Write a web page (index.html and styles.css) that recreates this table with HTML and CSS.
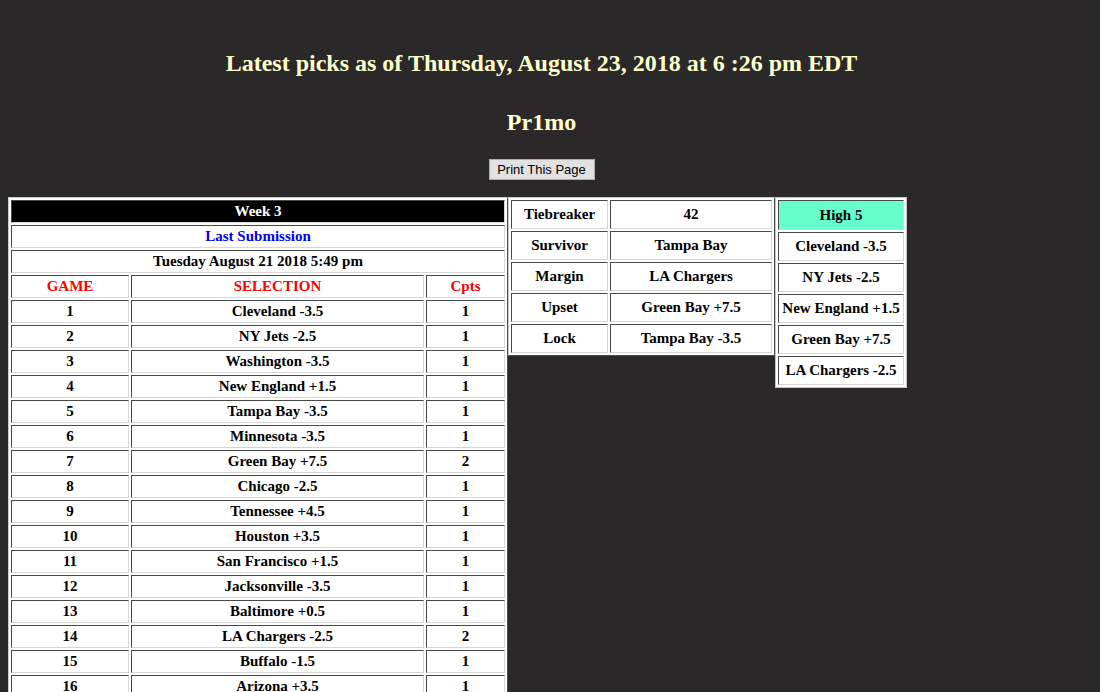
FILE: index.html
```html
<!DOCTYPE html>
<html>
<head>
<meta charset="utf-8">
<title>Latest picks</title>
<link rel="stylesheet" href="styles.css">
</head>
<body>
<div class="page">
  <h2 class="title">Latest picks as of Thursday, August 23, 2018 at 6 :26 pm EDT</h2>
  <h2 class="name">Pr1mo</h2>
  <div class="print-row"><button class="print-btn" type="button">Print This Page</button></div>
  <div class="boards">
    <table class="sheet picks">
      <tr><td colspan="3" class="week">Week 3</td></tr>
      <tr><td colspan="3" class="blue">Last Submission</td></tr>
      <tr><td colspan="3">Tuesday August 21 2018 5:49 pm</td></tr>
      <tr><td class="red c-game">GAME</td><td class="red c-sel">SELECTION</td><td class="red c-pts">Cpts</td></tr>
      <tr><td>1</td><td>Cleveland -3.5</td><td>1</td></tr>
      <tr><td>2</td><td>NY Jets -2.5</td><td>1</td></tr>
      <tr><td>3</td><td>Washington -3.5</td><td>1</td></tr>
      <tr><td>4</td><td>New England +1.5</td><td>1</td></tr>
      <tr><td>5</td><td>Tampa Bay -3.5</td><td>1</td></tr>
      <tr><td>6</td><td>Minnesota -3.5</td><td>1</td></tr>
      <tr><td>7</td><td>Green Bay +7.5</td><td>2</td></tr>
      <tr><td>8</td><td>Chicago -2.5</td><td>1</td></tr>
      <tr><td>9</td><td>Tennessee +4.5</td><td>1</td></tr>
      <tr><td>10</td><td>Houston +3.5</td><td>1</td></tr>
      <tr><td>11</td><td>San Francisco +1.5</td><td>1</td></tr>
      <tr><td>12</td><td>Jacksonville -3.5</td><td>1</td></tr>
      <tr><td>13</td><td>Baltimore +0.5</td><td>1</td></tr>
      <tr><td>14</td><td>LA Chargers -2.5</td><td>2</td></tr>
      <tr><td>15</td><td>Buffalo -1.5</td><td>1</td></tr>
      <tr><td>16</td><td>Arizona +3.5</td><td>1</td></tr>
    </table>
    <table class="sheet extras">
      <tr><td class="c-label">Tiebreaker</td><td class="c-value">42</td></tr>
      <tr><td>Survivor</td><td>Tampa Bay</td></tr>
      <tr><td>Margin</td><td>LA Chargers</td></tr>
      <tr><td>Upset</td><td>Green Bay +7.5</td></tr>
      <tr><td>Lock</td><td>Tampa Bay -3.5</td></tr>
    </table>
    <table class="sheet high5">
      <tr><td class="green">High 5</td></tr>
      <tr><td>Cleveland -3.5</td></tr>
      <tr><td>NY Jets -2.5</td></tr>
      <tr><td>New England +1.5</td></tr>
      <tr><td>Green Bay +7.5</td></tr>
      <tr><td>LA Chargers -2.5</td></tr>
    </table>
  </div>
</div>
</body>
</html>
```

FILE: styles.css
```css
html {
  overflow: hidden;
}

body {
  margin: 0;
  padding: 8px;
  background: #2a2829;
  font-family: "Liberation Serif", "Times New Roman", serif;
}

.page {
  width: 1067px;
}

.title,
.name {
  margin: 0;
  text-align: center;
  color: #ffffcc;
  font-size: 24px;
  line-height: 28px;
  font-weight: bold;
}

.title {
  margin-top: 41px;
}

.name {
  margin-top: 31px;
}

.print-row {
  margin-top: 23px;
  text-align: center;
  height: 21px;
}

.print-btn {
  box-sizing: border-box;
  height: 21px;
  width: 106px;
  padding: 0;
  background: #e1e1e1;
  border: 1px solid #adadad;
  color: #000;
  font-family: "Liberation Sans", Arial, sans-serif;
  font-size: 13px;
  vertical-align: top;
}

.boards {
  margin-top: 17px;
  display: flex;
  align-items: flex-start;
}

.sheet {
  box-sizing: border-box;
  border-collapse: separate;
  border-spacing: 2px;
  background: #fff;
  border: 1px solid;
  border-color: #cdcdcd #4d4d4d #4d4d4d #cdcdcd;
  flex: none;
}

.sheet td {
  box-sizing: border-box;
  border: 1px solid;
  border-color: #484848 #d6d6d6 #d6d6d6 #484848;
  padding: 0 1px;
  text-align: center;
  vertical-align: middle;
  font-weight: bold;
  font-size: 15px;
  line-height: 17px;
  color: #000;
  white-space: nowrap;
}

.picks {
  width: 500px;
}

.picks td {
  height: 23px;
}

.c-game { width: 118px; }
.c-sel { width: 293px; }
.c-pts { width: 79px; }

.week {
  background: #000;
  color: #fff !important;
}

.blue {
  color: #0000ff !important;
}

.red {
  color: #ff0000 !important;
}

.extras {
  width: 267px;
}

.extras td {
  height: 29px;
}

.c-label { width: 97px; }
.c-value { width: 162px; }

.high5 {
  width: 132px;
  border-color: #c4c4c4;
}

.high5 td {
  height: 29px;
}

.high5 .green {
  height: 30px;
  background: #66ffcc;
}
```
